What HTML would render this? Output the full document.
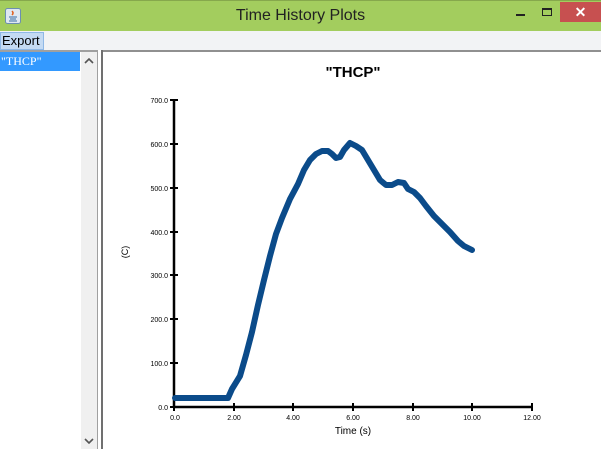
<!DOCTYPE html>
<html><head><style>
*{margin:0;padding:0;box-sizing:border-box}
body{width:601px;height:449px;overflow:hidden;background:#fff;font-family:"Liberation Sans",sans-serif;position:relative}
.title{position:absolute;left:0;top:0;width:601px;height:31px;background:#a3cd5e;border-top:1px solid #86a84c}
.title .t{position:absolute;left:0;width:601px;top:6px;text-align:center;font-size:16px;color:#222}
.close{position:absolute;left:560px;top:1px;width:41px;height:20px;background:#c75050;color:#fff;text-align:center;font-size:14px;font-weight:bold;line-height:20px}
.menu{position:absolute;left:0;top:31px;width:601px;height:19px;background:#f2f3f5}
.exp{position:absolute;left:0;top:32px;width:44px;height:18px;background:#c4daf3;border:1px solid #8fb8e6;font-size:13px;line-height:16px;padding-left:1px;color:#000}
.list{position:absolute;left:0;top:50px;width:81px;height:399px;background:#fff;border-top:2px solid #a0a0a0}
.sel{position:absolute;left:0;top:52px;width:80px;height:19px;background:#3399ff;color:#fff;font-family:"Liberation Serif",serif;font-size:12px;line-height:19px;padding-left:1px}
.sb{position:absolute;left:81px;top:50px;width:16px;height:399px;background:#f0f0f0;border-top:2px solid #a0a0a0}
.sep{position:absolute;left:97px;top:50px;width:6px;height:399px;background:#fff;border-left:1px solid #a0a0a0;border-right:2px solid #707070}
.panel{position:absolute;left:103px;top:50px;width:498px;height:399px;border-top:2px solid #909090}
</style></head><body>
<div class="title">
<svg style="position:absolute;left:5px;top:7px" width="16" height="16"><rect x="0.5" y="0.5" width="15" height="15" rx="2" fill="#dfe8f2" stroke="#6c8fb0"/><path d="M7 3 q2 2 0 4" stroke="#e06020" fill="none" stroke-width="1.5"/><path d="M4 9 h8 M5 11 h6 M4 13 h8" stroke="#3a6ea5" stroke-width="1"/></svg>
<div class="t">Time History Plots</div>
<div style="position:absolute;left:516px;top:13px;width:9px;height:2px;background:#222"></div>
<div style="position:absolute;left:542px;top:7px;width:10px;height:8px;border:1px solid #222;border-top-width:2px"></div>
<div class="close">✕</div>
</div>
<div class="menu"></div>
<div class="exp">Export</div>
<div class="list"></div>
<div class="sel">"THCP"</div>
<div class="sb">
<svg style="position:absolute;left:3px;top:6px" width="10" height="6"><path d="M1 5 L5 1 L9 5" stroke="#555" stroke-width="1.6" fill="none"/></svg>
<svg style="position:absolute;left:3px;top:386px" width="10" height="6"><path d="M1 1 L5 5 L9 1" stroke="#555" stroke-width="1.6" fill="none"/></svg>
</div>
<div class="sep"></div>
<div class="panel"></div>
<svg style="position:absolute;left:0;top:0" width="601" height="449" font-family="Liberation Sans, sans-serif">
<text x="353" y="77" text-anchor="middle" font-size="15" font-weight="bold">"THCP"</text>
<g stroke="#000" stroke-width="2.5">
<line x1="174" y1="99" x2="174" y2="408"/>
<line x1="173" y1="407" x2="533" y2="407"/>
</g>
<g stroke="#000" stroke-width="2">
<line x1="170" y1="100" x2="178" y2="100"/><line x1="170" y1="144" x2="178" y2="144"/><line x1="170" y1="188" x2="178" y2="188"/><line x1="170" y1="232" x2="178" y2="232"/><line x1="170" y1="275" x2="178" y2="275"/><line x1="170" y1="319" x2="178" y2="319"/><line x1="170" y1="363" x2="178" y2="363"/><line x1="170" y1="407" x2="178" y2="407"/>
<line x1="174" y1="403" x2="174" y2="411"/><line x1="234" y1="403" x2="234" y2="411"/><line x1="293" y1="403" x2="293" y2="411"/><line x1="353" y1="403" x2="353" y2="411"/><line x1="413" y1="403" x2="413" y2="411"/><line x1="472" y1="403" x2="472" y2="411"/><line x1="532" y1="403" x2="532" y2="411"/>
</g>
<g font-size="7" text-anchor="end">
<text x="168" y="103">700.0</text><text x="168" y="147">600.0</text><text x="168" y="191">500.0</text><text x="168" y="235">400.0</text><text x="168" y="278">300.0</text><text x="168" y="322">200.0</text><text x="168" y="366">100.0</text><text x="168" y="410">0.0</text>
</g>
<g font-size="7" text-anchor="middle">
<text x="175" y="420">0.0</text><text x="234" y="420">2.00</text><text x="293" y="420">4.00</text><text x="353" y="420">6.00</text><text x="413" y="420">8.00</text><text x="472" y="420">10.00</text><text x="532" y="420">12.00</text>
</g>
<text x="353" y="434" text-anchor="middle" font-size="10">Time (s)</text>
<text transform="translate(128,252) rotate(-90)" text-anchor="middle" font-size="9">(C)</text>
<polyline fill="none" stroke="#0b4b8a" stroke-width="6" stroke-linejoin="round" stroke-linecap="round" points="175,398 228,398 232,389 240,376 246,355 252,332 258,305 264,280 270,256 276,234 282,218 290,199 298,184 304,170 310,160 316,154 322,151 328,151 332,154 336,158 340,157 344,150 350,143 356,146 362,150 368,160 374,170 380,180 386,185 392,185 398,182 404,183 408,189 414,192 420,198 426,206 434,216 442,224 450,232 458,241 464,246 472,250"/>
</svg>
</body></html>
